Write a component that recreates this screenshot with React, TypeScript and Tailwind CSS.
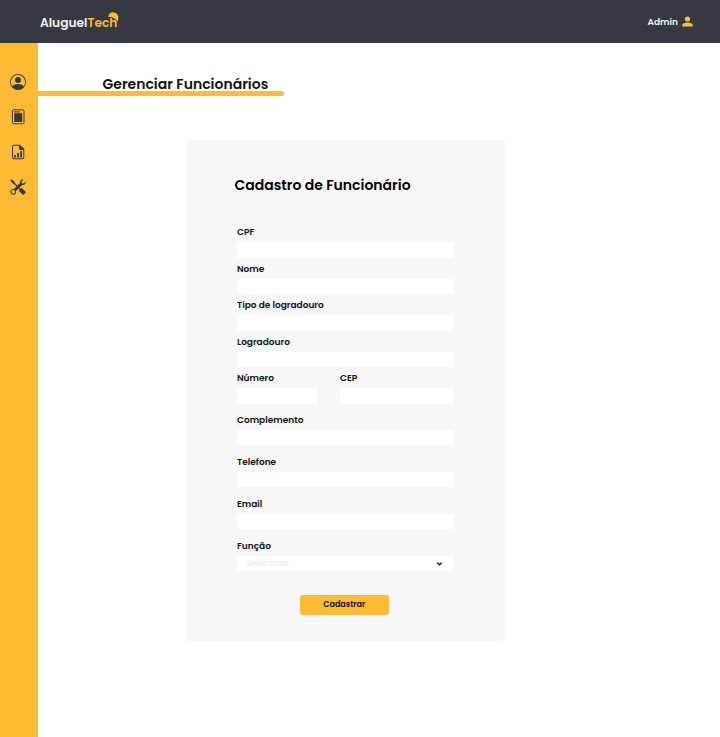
import type { ReactNode } from "react";

function Field({ label, className = "", children }: { label: string; className?: string; children?: ReactNode }) {
  return (
    <label className={`block ${className}`}>
      <span className="block h-[20px] whitespace-nowrap pt-px text-[9px] leading-[19px] font-semibold text-[#111]">{label}</span>
      {children ?? <input className="block h-[15.5px] w-full bg-white px-2 text-[9px] outline-none" />}
    </label>
  );
}

function Logo() {
  return (
    <div className="relative mt-px ml-[40px] h-[20px] whitespace-nowrap text-[12.2px] leading-[20px] font-semibold text-[#f5f5f5]">
      Aluguel<span className="text-[#ffbb34]">Tech</span>
      <svg className="absolute top-[-1px] left-[68px]" width="12" height="11" viewBox="0 0 12 11" fill="#ffbb34">
        <path d="M.4 4C.8 1.6 2.8.2 5 .3c3.4.1 5.6 2.7 5.3 5.9L9.9 9.6 8.5 8.3 6.4 6.5 3.8 5 .5 4.9Z" />
      </svg>
    </div>
  );
}

function Sidebar() {
  return (
    <nav className="flex w-[38px] shrink-0 flex-col items-center gap-[19px] bg-[#ffbb34] pt-[31px] pr-[2px] text-[#343a40]">
      <svg width="16" height="16" viewBox="0 0 16 16" fill="currentColor">
        <circle cx="8" cy="6" r="3" />
        <path fillRule="evenodd" d="M0 8a8 8 0 1 1 16 0A8 8 0 0 1 0 8Zm8-7a7 7 0 0 0-5.5 11.4C3.2 11.2 4.8 10 8 10s4.8 1.2 5.5 2.4A7 7 0 0 0 8 1Z" />
      </svg>
      <svg width="16" height="16" viewBox="0 0 16 16" fill="none" stroke="currentColor">
        <rect x="2.4" y=".8" width="11.6" height="14" rx="1.3" />
        <path d="M4.2 4.2v8.8h8V4.2Z" fill="currentColor" stroke="none" />
        <path d="M4.2 2.9h6" />
      </svg>
      <svg width="16" height="16" viewBox="0 0 16 16" fill="currentColor">
        <path fillRule="evenodd" d="M4 .8h6l4.3 4.3v8.2a2 2 0 0 1-2 2H4a2 2 0 0 1-2-2V2.8a2 2 0 0 1 2-2ZM4 1.8a1 1 0 0 0-1 1v10.5a1 1 0 0 0 1 1h8.3a1 1 0 0 0 1-1V6h-2.8A1.5 1.5 0 0 1 9 4.5V1.8Z" />
        <path d="M4.2 11h1.8v2.5H4.2zM7.2 9H9v4.5H7.2zM10.2 7H12v6.5h-1.8z" />
      </svg>
      <svg width="16" height="16" viewBox="-.3 -.3 16.6 16.6" fill="currentColor">
        <path d="M1 0 0 1l2.2 3.081a1 1 0 0 0 .815.419h.07a1 1 0 0 1 .708.293l2.675 2.675-2.617 2.654A3.003 3.003 0 0 0 0 13a3 3 0 1 0 5.878-.851l2.654-2.617.968.968-.305.914a1 1 0 0 0 .242 1.023l3.27 3.27a.997.997 0 0 0 1.414 0l1.586-1.586a.997.997 0 0 0 0-1.414l-3.27-3.27a1 1 0 0 0-1.023-.242L10.5 9.5l-.96-.96 2.68-2.643A3.005 3.005 0 0 0 16 3q0-.405-.102-.777l-2.14 2.141L12 4l-.364-1.757L13.777.102a3 3 0 0 0-3.675 3.68L7.462 6.46 4.793 3.793a1 1 0 0 1-.293-.707v-.071a1 1 0 0 0-.419-.814zM3 11l.471.242.529.026.287.445.445.287.026.529L5 13l-.242.471-.026.529-.445.287-.287.445-.529.026L3 15l-.471-.242L2 14.732l-.287-.445L1.268 14l-.026-.529L1 13l.242-.471.026-.529.445-.287.287-.445.529-.026z" />
      </svg>
    </nav>
  );
}

export default function App() {
  return (
    <div className="flex h-[737px] w-[720px] flex-col overflow-hidden bg-white font-['Poppins','Inter',sans-serif] text-[#111]">
      <header className="flex h-[43px] shrink-0 items-center justify-between bg-[#343a40] pt-[2px]">
        <Logo />
        <div className="mr-[27px] flex items-center gap-[4px] text-[9px] font-semibold text-[#f5f5f5]">
          <span>Admin</span>
          <svg width="11" height="11" viewBox="0 0 11 11" fill="#ffbb34" className="mb-[2px]">
            <circle cx="5.5" cy="3" r="2.6" />
            <path d="M.2 10.4V9.1C.2 7.4 2.8 6.5 5.5 6.5s5.3.9 5.3 2.6v1.3Z" />
          </svg>
        </div>
      </header>
      <div className="flex min-h-0 flex-1">
        <Sidebar />
        <main className="flex-1">
          <div className="mt-[29px] h-[24px] w-[245.5px]">
            <h1 className="ml-[64.5px] h-[19px] whitespace-nowrap text-[14px] leading-[24px] font-semibold">Gerenciar Funcionários</h1>
            <div className="h-[5px] rounded-r-full bg-[#ffbb34]" />
          </div>
          <form className="mt-[44px] ml-[148px] h-[501px] w-[319px] rounded-[3px] bg-[#f7f7f7] px-[51px] pt-[33px]" onSubmit={(e) => e.preventDefault()}>
            <h2 className="-ml-[2.5px] h-[24px] whitespace-nowrap text-[14px] leading-[24px] font-semibold text-black">Cadastro de Funcionário</h2>
            <div className="mt-[25px] flex flex-col gap-[1px]">
              <Field label="CPF" />
              <Field label="Nome" />
              <Field label="Tipo de logradouro" />
              <Field label="Logradouro" />
              <div className="flex justify-between">
                <Field label="Número" className="w-[80px]" />
                <Field label="CEP" className="w-[114px]" />
              </div>
            </div>
            <div className="mt-[6px] flex flex-col gap-[6.5px]">
              <Field label="Complemento" />
              <Field label="Telefone" />
              <Field label="Email" />
              <Field label="Função">
                <div className="flex h-[15px] items-center justify-between bg-white pr-[12px] pl-[9.5px] text-[8px] text-[#ebebeb]">
                  <span className="pt-px font-medium">Selecionar</span>
                  <svg width="5" height="4" viewBox="0 0 5 4" fill="none" stroke="#111" strokeWidth="1.3" className="mt-px">
                    <path d="M.4.7 2.5 2.8 4.6.7" />
                  </svg>
                </div>
              </Field>
            </div>
            <button className="mt-[24px] ml-[62.5px] block h-[20px] w-[89.5px] rounded-[3px] bg-[#ffbb34] text-[8px] leading-[20px] font-semibold">Cadastrar</button>
          </form>
        </main>
      </div>
    </div>
  );
}
